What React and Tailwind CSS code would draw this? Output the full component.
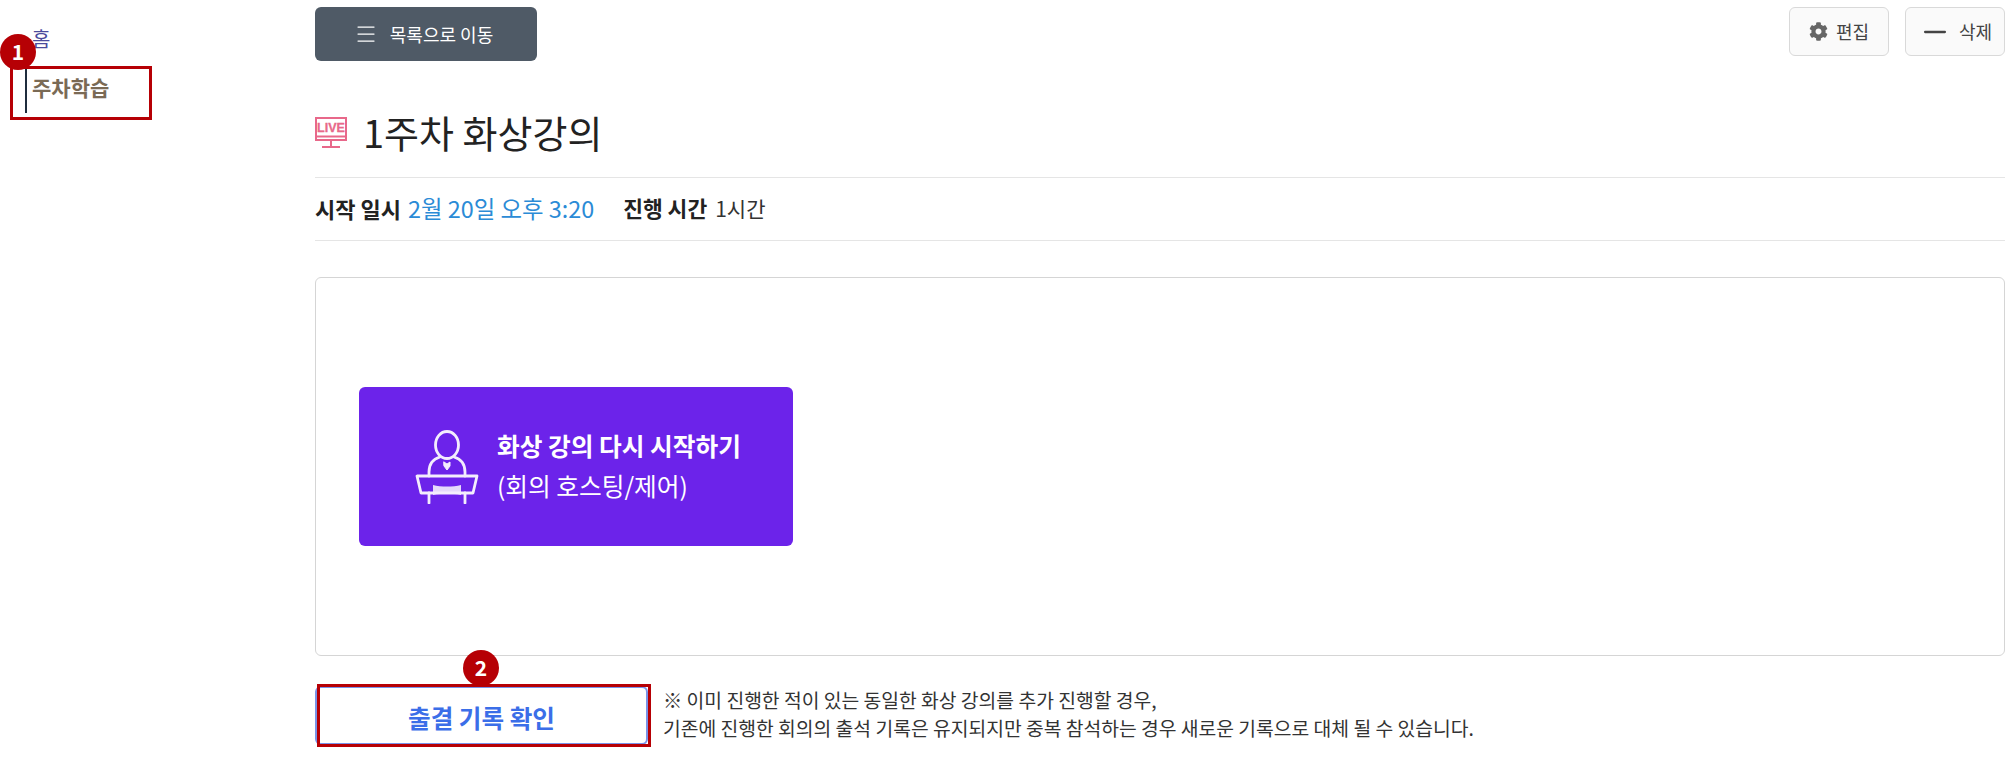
import { Minus, Menu } from 'lucide-react';
import { FaCog } from 'react-icons/fa';

const font = 'font-["Noto_Sans_CJK_KR","Noto_Sans",sans-serif]';

function Badge({ children, className }) {
  return (
    <span className={`absolute flex h-[36px] w-[36px] items-center justify-center rounded-full bg-[#b60005] text-[21px] font-bold text-white ${className}`}>
      {children}
    </span>
  );
}

function LiveIcon() {
  return (
    <svg width="32" height="31" viewBox="0 0 32 31" fill="none" stroke="#e8688a" strokeWidth="2">
      <rect x="1" y="1" width="30" height="22" />
      <line x1="1" y1="19.5" x2="31" y2="19.5" />
      <line x1="16" y1="23" x2="16" y2="29" />
      <line x1="7" y1="30" x2="25" y2="30" />
      <text x="16" y="15" textAnchor="middle" fontSize="12.5" fontWeight="700" fill="#e8688a" stroke="#e8688a" strokeWidth="0.3" fontFamily="Liberation Sans, sans-serif">LIVE</text>
    </svg>
  );
}

function LecternIcon() {
  return (
    <svg width="64" height="74" viewBox="0 0 64 74" fill="none" stroke="white" strokeWidth="2.8" strokeLinejoin="round" strokeLinecap="round" opacity="0.92">
      <ellipse cx="32" cy="15" rx="11.5" ry="13.5" />
      <path d="M14 46 V42 C14 33 18 29 25 27 M50 46 V42 C50 33 46 29 39 27" />
      <path d="M29 32 L32 34 L35 32 L35 36 L32 40 L29 36 Z" fill="white" strokeWidth="1" />
      <path d="M2 46 H62 L58 63 H6 Z" />
      <path d="M14 63 V73 M50 63 V73" />
      <path d="M18 55 C26 57 38 57 46 55 V65 C38 63 26 63 18 65 Z" fill="white" stroke="none" opacity="0.9" />
    </svg>
  );
}

export default function App() {
  return (
    <div className={`flex h-[761px] bg-white overflow-hidden ${font}`}>
      {/* Sidebar */}
      <aside className="relative w-[315px] shrink-0 pt-[25px]">
        <a className="ml-[32px] block text-[20px] leading-[28px] text-[#4b4b9c]">홈</a>
        <div className="ml-[25px] mt-[14px] flex h-[46px] items-center border-l-2 border-[#1f2d3d] pb-[4px] pl-[5px] text-[21px] font-bold text-[#7a6a55]">
          주차학습
        </div>
        <div className="absolute left-[10px] top-[66px] h-[54px] w-[142px] border-[3px] border-[#b60005]" />
        <Badge className="left-0 top-[34px]">1</Badge>
      </aside>

      {/* Main */}
      <main className="w-[1690px] shrink-0">
        <div className="flex items-start justify-between pt-[7px]">
          <button className="flex h-[54px] w-[222px] items-center justify-center gap-[12px] rounded-md bg-[#4f5a66] pr-[5px] text-[18px] text-white">
            <Menu className="h-[24px] w-[24px]" strokeWidth={1.25} />
            목록으로 이동
          </button>
          <div className="flex gap-[16px]">
            <button className="flex h-[49px] w-[100px] items-center justify-center gap-[8px] rounded-md border border-[#d9d9d9] bg-[#fafafa] text-[18px] text-[#444]">
              <FaCog className="h-[19px] w-[19px] text-[#666]" />
              편집
            </button>
            <button className="flex h-[49px] w-[100px] items-center justify-center gap-[7px] rounded-md border border-[#d9d9d9] bg-[#fafafa] text-[18px] text-[#444]">
              <Minus className="h-[34px] w-[34px] text-[#444]" strokeWidth={1.6} />
              삭제
            </button>
          </div>
        </div>

        <div className="mt-[36px] flex h-[81px] items-center gap-[16px] border-b border-[#e5e5e5] pb-[10px]">
          <LiveIcon />
          <h1 className="text-[38px] leading-none text-[#222]">1주차 화상강의</h1>
        </div>

        <div className="flex h-[63px] items-center border-b border-[#e5e5e5] pb-[1px] text-[#333]">
          <b className="text-[22px] font-bold text-[#222]">시작 일시</b>
          <span className="ml-[7px] text-[23.4px] text-[#2b8bd6]">2월 20일 오후 3:20</span>
          <b className="ml-[29px] text-[21.5px] font-bold text-[#222]">진행 시간</b>
          <span className="ml-[8px] text-[21px]">1시간</span>
        </div>

        <div className="mt-[36px] flex h-[379px] items-center rounded-md border border-[#d5d5d5] px-[43px]">
          <button className="flex h-[159px] w-[434px] items-center gap-[18px] rounded-md bg-[#6c23ea] pl-[56px] text-left text-white">
            <LecternIcon />
            <span className="-mt-[4px] text-[24.7px] leading-[40px]">
              <b className="block font-bold">화상 강의 다시 시작하기</b>
              (회의 호스팅/제어)
            </span>
          </button>
        </div>

        <div className="relative mt-[30px] flex items-center gap-[15px]">
          <button className="h-[59px] w-[333px] rounded-md border-2 border-[#7a93e8] pt-[3px] text-[24.6px] font-bold text-[#3b6ee8]">
            출결 기록 확인
          </button>
          <p className="-mt-[4px] text-[19.3px] leading-[28px] text-[#333]">
            ※ 이미 진행한 적이 있는 동일한 화상 강의를 추가 진행할 경우,
            <br />
            기존에 진행한 회의의 출석 기록은 유지되지만 중복 참석하는 경우 새로운 기록으로 대체 될 수 있습니다.
          </p>
          <div className="absolute left-[2px] top-[-2px] h-[63px] w-[334px] border-[3px] border-[#b60005]" />
          <Badge className="left-[148px] top-[-36px]">2</Badge>
        </div>
      </main>
    </div>
  );
}
